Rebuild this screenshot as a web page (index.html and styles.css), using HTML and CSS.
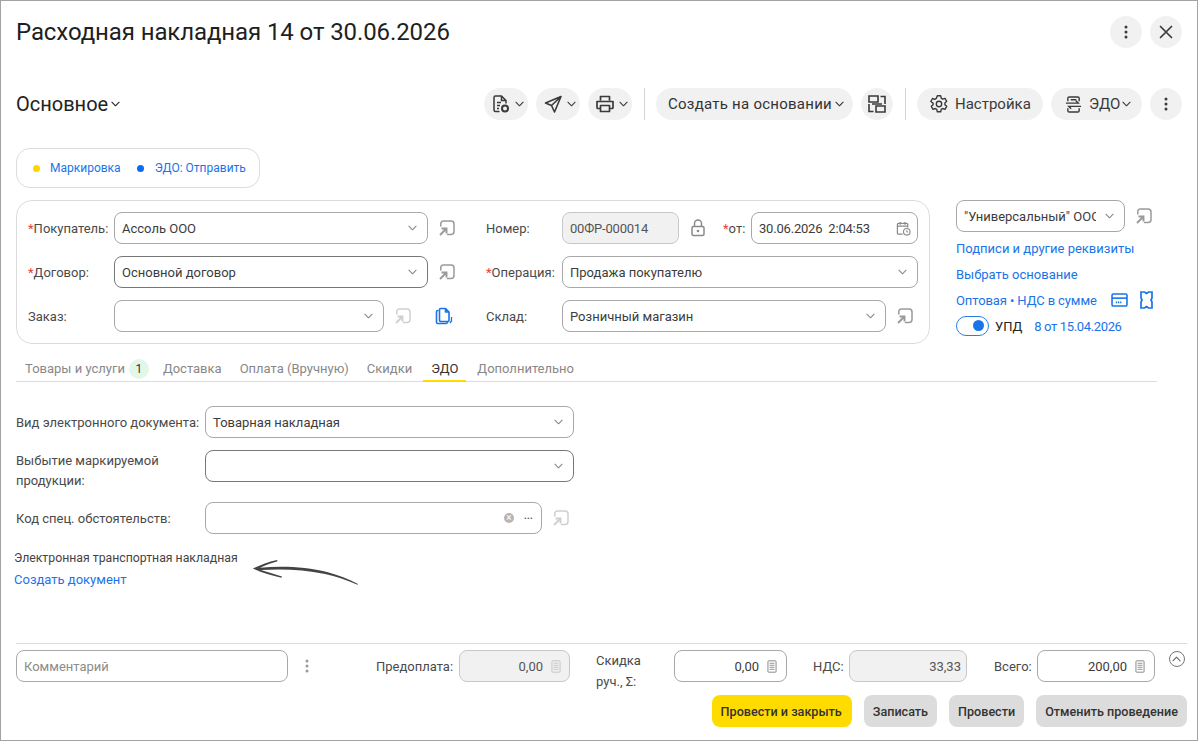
FILE: index.html
```html
<!DOCTYPE html>
<html lang="ru">
<head>
    <meta charset="UTF-8">
    <title>Расходная накладная 14 от 30.06.2026</title>
    <link rel="stylesheet" href="styles.css">
</head>
<body>
    <svg class="sprite" width="0" height="0">
        <symbol id="i-chev" viewBox="0 0 10 6"><path d="M1 1l4 4 4-4" fill="none" stroke="currentColor" stroke-width="1.2" stroke-linecap="round" stroke-linejoin="round"/></symbol>
        <symbol id="i-dots" viewBox="0 0 16 16"><circle cx="8" cy="3" r="1.5"/><circle cx="8" cy="8" r="1.5"/><circle cx="8" cy="13" r="1.5"/></symbol>
        <symbol id="i-close" viewBox="0 0 16 16"><path d="M2.5 2.5l11 11M13.5 2.5l-11 11" fill="none" stroke="currentColor" stroke-width="1.7" stroke-linecap="round"/></symbol>
        <symbol id="i-link" viewBox="0 0 16 16"><path d="M1.800 6V3.500A2.500 2.500 0 0 1 4.300 1h7.700a3 3 0 0 1 3 3v7.500a3 3 0 0 1-3 3H8.500" fill="none" stroke="currentColor" stroke-width="1.500" stroke-linecap="round"/><path d="M1 15l5.500-5.500M2.500 8.500h5v5" fill="none" stroke="currentColor" stroke-width="1.900"/></symbol>
        <symbol id="i-doc" viewBox="0 0 20 20"><path d="M8.500 17.500H4.500a1.500 1.500 0 0 1-1.500-1.500V3.500A1.500 1.500 0 0 1 4.500 2h6l4.500 4.500v3M10.500 2v4.500H15M6 8.500h4M6 11.500h3M6 14.500h2" fill="none" stroke="currentColor" stroke-width="1.500" stroke-linejoin="round"/><circle cx="14" cy="14.500" r="3" fill="none" stroke="currentColor" stroke-width="2"/></symbol>
        <symbol id="i-send" viewBox="0 0 20 20"><path d="M18 2.500L2.500 9l6 2.500 3 6.500zM18 2.500L8.500 11.500" fill="none" stroke="currentColor" stroke-width="1.600" stroke-linejoin="round"/></symbol>
        <symbol id="i-print" viewBox="0 0 20 20"><path d="M5.500 6.500V2.500h9v4M5.500 14.500H3a1 1 0 0 1-1-1v-6h16v6a1 1 0 0 1-1 1h-2.500M5.500 11.500h9v6h-9z" fill="none" stroke="currentColor" stroke-width="1.700" stroke-linejoin="round"/></symbol>
        <symbol id="i-struct" viewBox="0 0 18 18"><path d="M1 1h9v6H1zM8 11h9v6H8zM12.500 1.500H17V9M1 9v7.500h4.500M4 9h10" fill="none" stroke="currentColor" stroke-width="1.600"/></symbol>
        <symbol id="i-gear" viewBox="0 0 20 20"><path d="M8.300 1.800h3.400l.5 2.400 1.500.9 2.300-.8 1.700 3-1.800 1.600v1.800l1.800 1.600-1.700 3-2.300-.8-1.500.9-.5 2.400H8.300l-.5-2.400-1.500-.9-2.300.8-1.700-3 1.800-1.600V9.100L1.800 7.500l1.700-3 2.300.8 1.500-.9z" fill="none" stroke="currentColor" stroke-width="1.400" stroke-linejoin="round"/><circle cx="10" cy="10" r="2.700" fill="none" stroke="currentColor" stroke-width="1.400"/></symbol>
        <symbol id="i-edo" viewBox="0 0 18 20"><path d="M3 6.500V3.500A1.500 1.500 0 0 1 4.500 2h9A1.500 1.500 0 0 1 15 3.500v3M3 14v2.500A1.500 1.500 0 0 0 4.500 18h9a1.500 1.500 0 0 0 1.500-1.500V14M1 8.500h13l-2.500-2.500M17 12H4l2.500 2.500M6 5h6" fill="none" stroke="currentColor" stroke-width="1.500"/></symbol>
        <symbol id="i-lock" viewBox="0 0 14 18"><path d="M3.500 7.500V4.500a3.500 3.500 0 0 1 7 0v3" fill="none" stroke="currentColor" stroke-width="1.500"/><rect x="1" y="7.500" width="12" height="9" rx="1.500" fill="none" stroke="currentColor" stroke-width="1.500"/><circle cx="7" cy="12" r="1.300"/></symbol>
        <symbol id="i-cal" viewBox="0 0 16 16"><path d="M7 14H2.500a1 1 0 0 1-1-1V3.500a1 1 0 0 1 1-1h9a1 1 0 0 1 1 1V7M1.500 5.500h11M4.500 1v3M9.500 1v3" fill="none" stroke="currentColor" stroke-width="1.300"/><circle cx="11.500" cy="11.500" r="3.500" fill="none" stroke="currentColor" stroke-width="1.200"/><path d="M11.500 9.800v1.900h1.500" fill="none" stroke="currentColor"/></symbol>
        <symbol id="i-copy" viewBox="0 0 18 18"><path d="M3.500 3.500H2.800a1.300 1.300 0 0 0-1.300 1.300v10.400a1.300 1.300 0 0 0 1.300 1.300H11a1.300 1.300 0 0 0 1.300-1.300v-.7" fill="none" stroke="currentColor" stroke-width="1.600"/><path d="M4.500 2.800A1.300 1.300 0 0 1 5.800 1.500h4.700l3.500 3.500v8.200a1.300 1.300 0 0 1-1.300 1.300H5.800a1.300 1.300 0 0 1-1.300-1.300zM10.500 1.500V5H14" fill="none" stroke="currentColor" stroke-width="1.600" stroke-linejoin="round"/><path d="M16.500 10v4l-1.500 2" fill="none" stroke="currentColor" stroke-width="1.300"/></symbol>
        <symbol id="i-card" viewBox="0 0 18 15"><rect x="1" y="1" width="16" height="13" rx="1.500" fill="none" stroke="currentColor" stroke-width="1.700"/><path d="M1 5.500h16" stroke="currentColor" stroke-width="1.700"/><path d="M5 10h6" stroke="currentColor" stroke-width="1.800" stroke-dasharray="1.500 .8"/></symbol>
        <symbol id="i-ticket" viewBox="0 0 13 18"><path d="M1 1h3.500l2 1.500 2-1.500H12v6l-1 2 1 2v6H8.500l-2-1.500-2 1.500H1v-6l1-2-1-2z" fill="none" stroke="currentColor" stroke-width="1.700"/></symbol>
        <symbol id="i-calc" viewBox="0 0 12 16"><rect x="1" y="1" width="10" height="14" rx="1" fill="none" stroke="currentColor" stroke-width="1.200"/><path d="M3 4h6M3 6.500h6M3 9h6M3 11.500h6" stroke="currentColor" stroke-width="1.100"/></symbol>
    </svg>

    <div class="window">
        <div class="title-row">
            <h1>Расходная накладная 14 от 30.06.2026</h1>
            <div class="title-btns">
                <button class="pill icon-only"><svg class="ic-16"><use href="#i-dots"/></svg></button>
                <button class="pill icon-only"><svg class="ic-16"><use href="#i-close"/></svg></button>
            </div>
        </div>

        <div class="toolbar">
            <div class="section-name">Основное<svg class="chev-sm"><use href="#i-chev"/></svg></div>
            <div class="tools">
                <button class="pill drop"><svg class="ic-20"><use href="#i-doc"/></svg><svg class="chev-sm"><use href="#i-chev"/></svg></button>
                <button class="pill drop"><svg class="ic-20"><use href="#i-send"/></svg><svg class="chev-sm"><use href="#i-chev"/></svg></button>
                <button class="pill drop"><svg class="ic-20"><use href="#i-print"/></svg><svg class="chev-sm"><use href="#i-chev"/></svg></button>
                <span class="sep"></span>
                <button class="pill create">Создать на основании<svg class="chev-sm"><use href="#i-chev"/></svg></button>
                <button class="pill icon-only"><svg class="ic-struct"><use href="#i-struct"/></svg></button>
                <span class="sep"></span>
                <button class="pill settings"><svg class="ic-20"><use href="#i-gear"/></svg>Настройка</button>
                <button class="pill edo"><svg class="ic-edo"><use href="#i-edo"/></svg>ЭДО<svg class="chev-sm"><use href="#i-chev"/></svg></button>
                <button class="pill icon-only"><svg class="ic-16"><use href="#i-dots"/></svg></button>
            </div>
        </div>

        <div class="status">
            <span class="dot yellow"></span><a class="link">Маркировка</a>
            <span class="dot blue"></span><a class="link">ЭДО: Отправить</a>
        </div>

        <div class="main">
            <div class="card">
                <div class="col col-left">
                    <div class="row">
                        <label class="lbl lbl-l"><i>*</i>Покупатель:</label>
                        <div class="field w-314">Ассоль ООО<svg class="chev"><use href="#i-chev"/></svg></div>
                        <svg class="link-ic"><use href="#i-link"/></svg>
                    </div>
                    <div class="row">
                        <label class="lbl lbl-l"><i>*</i>Договор:</label>
                        <div class="field w-314 dark">Основной договор<svg class="chev"><use href="#i-chev"/></svg></div>
                        <svg class="link-ic"><use href="#i-link"/></svg>
                    </div>
                    <div class="row">
                        <label class="lbl lbl-l">Заказ:</label>
                        <div class="field w-270"><svg class="chev"><use href="#i-chev"/></svg></div>
                        <svg class="link-ic faded"><use href="#i-link"/></svg>
                        <svg class="copy-ic"><use href="#i-copy"/></svg>
                    </div>
                </div>
                <div class="col col-right">
                    <div class="row">
                        <label class="lbl lbl-r">Номер:</label>
                        <div class="field disabled w-117 digits">00ФР-000014</div>
                        <svg class="lock-ic"><use href="#i-lock"/></svg>
                        <label class="lbl lbl-from"><i>*</i>от:</label>
                        <div class="field w-167 digits">30.06.2026&nbsp; 2:04:53<svg class="cal-ic"><use href="#i-cal"/></svg></div>
                    </div>
                    <div class="row">
                        <label class="lbl lbl-r"><i>*</i>Операция:</label>
                        <div class="field w-356">Продажа покупателю<svg class="chev"><use href="#i-chev"/></svg></div>
                    </div>
                    <div class="row">
                        <label class="lbl lbl-r">Склад:</label>
                        <div class="field w-324">Розничный магазин<svg class="chev"><use href="#i-chev"/></svg></div>
                        <svg class="link-ic"><use href="#i-link"/></svg>
                    </div>
                </div>
            </div>

            <div class="side">
                <div class="row">
                    <div class="field w-169"><span class="clip">"Универсальный" ООО</span><svg class="chev"><use href="#i-chev"/></svg></div>
                    <svg class="link-ic"><use href="#i-link"/></svg>
                </div>
                <a class="link side-link">Подписи и другие реквизиты</a>
                <a class="link side-link">Выбрать основание</a>
                <div class="side-row">
                    <a class="link price">Оптовая • НДС в сумме</a>
                    <svg class="card-ic"><use href="#i-card"/></svg>
                    <svg class="ticket-ic"><use href="#i-ticket"/></svg>
                </div>
                <div class="side-row upd">
                    <span class="toggle"></span>
                    <span class="upd-name">УПД</span>
                    <a class="link digits">8 от 15.04.2026</a>
                </div>
            </div>
        </div>

        <div class="tabs">
            <span class="tab tab-first">Товары и услуги<b class="badge">1</b></span>
            <span class="tab">Доставка</span>
            <span class="tab">Оплата (Вручную)</span>
            <span class="tab">Скидки</span>
            <span class="tab active">ЭДО</span>
            <span class="tab">Дополнительно</span>
        </div>

        <div class="edo-form">
            <div class="row">
                <label class="lbl lbl-edo">Вид электронного документа:</label>
                <div class="field w-369">Товарная накладная<svg class="chev"><use href="#i-chev"/></svg></div>
            </div>
            <div class="row row-top">
                <label class="lbl lbl-edo two-line">Выбытие маркируемой продукции:</label>
                <div class="field w-369 dark"><svg class="chev"><use href="#i-chev"/></svg></div>
            </div>
            <div class="row">
                <label class="lbl lbl-edo">Код спец. обстоятельств:</label>
                <div class="field w-337">
                    <span class="clear">×</span><span class="more">•••</span>
                </div>
                <svg class="link-ic faded"><use href="#i-link"/></svg>
            </div>
        </div>

        <div class="etn">
            <div class="etn-title">Электронная транспортная накладная</div>
            <a class="link">Создать документ</a>
            <svg class="arrow" viewBox="0 0 108 26" width="108" height="26">
                <path d="M1 9.500C8 6 16 3 25 1l.6 1.300C19 4.200 13 6.500 8 8.800 30 6.500 55 8 75 13c11 3 22 7 31 12l-.5.800C95 21 84 17.500 73 15 52 10.500 30 9.800 9 11c6 2 13 4 21 6.500l-.5 1.300C20 16.500 9 13.500 1 9.500z" fill="#444"/>
            </svg>
        </div>

        <div class="footer">
            <div class="totals">
                <div class="field w-272 placeholder">Комментарий</div>
                <svg class="ic-16 foot-dots"><use href="#i-dots"/></svg>
                <label class="lbl foot-prepay">Предоплата:</label>
                <div class="field disabled num w-111">0,00<svg class="calc-ic"><use href="#i-calc"/></svg></div>
                <label class="lbl foot-disc">Скидка руч., Σ:</label>
                <div class="field num w-113">0,00<svg class="calc-ic"><use href="#i-calc"/></svg></div>
                <label class="lbl foot-vat">НДС:</label>
                <div class="field disabled num w-118">33,33</div>
                <label class="lbl foot-total">Всего:</label>
                <div class="field num w-118">200,00<svg class="calc-ic"><use href="#i-calc"/></svg></div>
                <span class="collapse"><svg class="chev-sm"><use href="#i-chev"/></svg></span>
            </div>
            <div class="actions">
                <button class="act primary">Провести и закрыть</button>
                <button class="act">Записать</button>
                <button class="act">Провести</button>
                <button class="act">Отменить проведение</button>
            </div>
        </div>
    </div>
</body>
</html>
```

FILE: styles.css
```css
* {
    box-sizing: border-box;
}
html, body {
    margin: 0;
    padding: 0;
}
body {
    font-family: Roboto, "Liberation Sans", sans-serif;
    font-size: 13px;
    color: #333;
    background: #fff;
}
.sprite {
    position: absolute;
}
svg {
    display: block;
    flex: none;
    fill: currentColor;
}
.window {
    width: 1198px;
    height: 741px;
    border: 1px solid #a3a3a3;
    display: flex;
    flex-direction: column;
    overflow: hidden;
}
.title-row {
    display: flex;
    justify-content: space-between;
    align-items: center;
    height: 32px;
    margin: 15px 15px 0;
}
h1 {
    margin: 0;
    font-size: 24px;
    font-weight: 400;
    color: #1f1f1f;
    letter-spacing: -0.1px;
}
.title-btns, .tools {
    display: flex;
    align-items: center;
    gap: 8px;
}
.pill {
    display: flex;
    align-items: center;
    height: 32px;
    border: 0;
    border-radius: 16px;
    background: #f1f1f1;
    color: #3a3a3a;
    font-family: inherit;
    font-size: 15px;
    padding: 0;
}
.icon-only {
    width: 32px;
    justify-content: center;
}
.drop {
    width: 44px;
    padding-left: 7px;
    gap: 2px;
}
.create {
    width: 197px;
    padding-left: 12px;
    color: #333;
    letter-spacing: 0.25px;
}
.settings {
    width: 126px;
    padding-left: 12px;
    gap: 6px;
}
.edo {
    width: 91px;
    padding-left: 14px;
    gap: 7px;
}
.edo .chev-sm {
    margin-left: -5px;
}
.ic-16 {
    width: 16px;
    height: 16px;
}
.ic-20 {
    width: 20px;
    height: 20px;
}
.ic-struct {
    width: 18px;
    height: 18px;
}
.ic-edo {
    width: 17px;
    height: 19px;
}
.chev-sm {
    width: 9px;
    height: 6px;
    margin-left: 2px;
}
.create .chev-sm {
    margin-left: 3px;
}
.sep {
    width: 1px;
    height: 32px;
    background: #d4d4d4;
    margin: 0 3px 0 4px;
}
.toolbar {
    display: flex;
    justify-content: space-between;
    align-items: center;
    height: 32px;
    margin: 40px 15px 0;
}
.section-name {
    display: flex;
    align-items: center;
    font-size: 20px;
    color: #222;
}
.section-name .chev-sm {
    margin-left: 3px;
}
.status {
    display: flex;
    align-items: center;
    width: 244px;
    height: 40px;
    margin: 28px 0 0 15px;
    padding-left: 16px;
    border: 1px solid #dcdcdc;
    border-radius: 14px;
    font-size: 12px;
}
.dot {
    width: 7px;
    height: 7px;
    border-radius: 50%;
    margin-right: 10px;
}
.dot.yellow {
    background: #ffd400;
}
.dot.blue {
    background: #0a6cf5;
    margin-left: 16px;
    margin-right: 11px;
}
.link {
    color: #1a74e8;
    text-decoration: none;
}
.main {
    display: flex;
    margin: 12px 0 0 15px;
}
.card {
    display: flex;
    width: 914px;
    height: 144px;
    padding: 11px;
    border: 1px solid #dcdcdc;
    border-radius: 16px;
}
.col {
    display: flex;
    flex-direction: column;
    gap: 12px;
}
.col-left {
    width: 458px;
}
.row {
    display: flex;
    align-items: center;
    min-height: 32px;
}
.row-top {
    align-items: flex-start;
    min-height: 40px;
}
.lbl {
    flex: none;
    height: 32px;
    line-height: 34px;
    color: #4a4a4a;
    white-space: nowrap;
}
.lbl i {
    color: #e8403a;
    font-style: normal;
}
.lbl-l {
    width: 86px;
}
.lbl-r {
    width: 76px;
}
.lbl-from {
    width: 28px;
    margin-left: 18px;
}
.field {
    position: relative;
    display: flex;
    align-items: center;
    flex: none;
    height: 32px;
    padding: 0 7px;
    border: 1px solid #a8a8a8;
    border-radius: 8px;
    background: #fff;
    color: #3c3c3c;
    white-space: nowrap;
}
.field.dark {
    border-color: #777;
}
.field.disabled {
    background: #f1f1f1;
    border-color: #c8c8c8;
    color: #555;
}
.digits {
    letter-spacing: -0.2px;
}
.field .chev {
    margin-left: auto;
    margin-right: 3px;
}
.chev {
    width: 9px;
    height: 6px;
    color: #888;
}
.w-314 { width: 314px; }
.w-270 { width: 270px; }
.w-117 { width: 117px; }
.w-167 { width: 167px; }
.w-356 { width: 356px; }
.w-324 { width: 324px; }
.w-169 { width: 169px; }
.w-369 { width: 369px; }
.w-337 { width: 337px; }
.w-272 { width: 272px; }
.w-111 { width: 111px; }
.w-113 { width: 113px; }
.w-118 { width: 118px; }
.link-ic {
    width: 16px;
    height: 16px;
    margin-left: 11px;
    color: #9a9a9a;
}
.link-ic.faded {
    color: #cfcfcf;
}
.copy-ic {
    width: 18px;
    height: 18px;
    margin-left: 24px;
    color: #1a74e8;
}
.lock-ic {
    width: 14px;
    height: 18px;
    margin-left: 12px;
    color: #8a8a8a;
}
.cal-ic {
    width: 15px;
    height: 15px;
    margin-left: auto;
    margin-right: -1px;
    color: #8a8a8a;
}
.side {
    display: flex;
    flex-direction: column;
    margin-left: 26px;
    width: 220px;
}
.clip {
    overflow: hidden;
    width: 132px;
}
.side-link {
    display: block;
    margin-top: 8px;
    line-height: 17px;
}
.side-link + .side-link {
    margin-top: 9px;
}
.side-row {
    display: flex;
    align-items: center;
    height: 18px;
    margin-top: 8px;
}
.price {
    letter-spacing: -0.1px;
}
.card-ic {
    width: 17px;
    height: 14px;
    margin-left: 14px;
    color: #1a74e8;
}
.ticket-ic {
    width: 13px;
    height: 18px;
    margin-left: 12px;
    color: #1a74e8;
}
.upd {
    margin-top: 8px;
}
.upd .digits {
    letter-spacing: -0.35px;
}
.toggle {
    position: relative;
    width: 33px;
    height: 20px;
    border: 1.500px solid #2a7de8;
    border-radius: 10px;
}
.toggle::after {
    content: "";
    position: absolute;
    right: 4px;
    top: 3px;
    width: 11px;
    height: 11px;
    border-radius: 50%;
    background: #1a74e8;
}
.upd-name {
    margin: 0 12px 0 6px;
    color: #222;
}
.tabs {
    display: flex;
    align-items: flex-start;
    width: 1141px;
    height: 25px;
    margin: 13px 0 0 15px;
    border-bottom: 1px solid #dcdcdc;
}
.tab {
    display: flex;
    align-items: center;
    height: 25px;
    padding: 0 9px 2px;
    color: #888;
}
.tab-first {
    padding-right: 5px;
}
.tab.active {
    margin: 0 2px;
    padding: 0 8px;
    color: #333;
    border-bottom: 2px solid #ffd900;
}
.badge {
    display: flex;
    justify-content: center;
    align-items: center;
    width: 20px;
    height: 20px;
    margin-left: 4px;
    border-radius: 50%;
    background: #e3f7e9;
    color: #333;
    font-size: 12px;
    font-weight: 400;
}
.edo-form {
    display: flex;
    flex-direction: column;
    gap: 12px;
    margin: 24px 0 0 15px;
}
.lbl-edo {
    width: 189px;
}
.two-line {
    height: 40px;
    padding-top: 1px;
    white-space: normal;
    line-height: 20px;
}
.clear {
    display: flex;
    justify-content: center;
    align-items: center;
    width: 10px;
    height: 10px;
    margin-left: auto;
    border-radius: 50%;
    background: #b5b5b5;
    color: #fff;
    font-size: 10px;
    line-height: 1;
}
.more {
    margin: 0 1px 0 10px;
    font-size: 8px;
    letter-spacing: 0.3px;
    color: #555;
}
.etn {
    position: relative;
    margin: 13px 0 0 13px;
    font-size: 13px;
    line-height: 22px;
}
.etn-title {
    font-size: 12.280px;
    color: #444;
}
.arrow {
    position: absolute;
    left: 238px;
    top: 12px;
}
.footer {
    margin: auto 10px 13px 15px;
    padding-top: 6px;
    border-top: 1px solid #dcdcdc;
}
.totals {
    display: flex;
    align-items: flex-start;
    height: 32px;
}
.placeholder {
    color: #8c8c8c;
}
.foot-dots {
    margin: 8px 0 0 11px;
    color: #9a9a9a;
}
.foot-prepay {
    margin-left: 61px;
    width: 83px;
}
.foot-disc {
    width: 60px;
    height: 42px;
    margin: 0 18px 0 26px;
    white-space: normal;
    line-height: 21px;
}
.foot-vat {
    margin-left: 26px;
    width: 36px;
}
.foot-total {
    margin-left: 27px;
    width: 43px;
}
.num {
    justify-content: flex-end;
}
.disabled.num {
    padding-right: 5px;
}
.calc-ic {
    width: 10px;
    height: 13px;
    margin: 0 2px 0 8px;
    color: #888;
}
.disabled .calc-ic {
    margin-right: 3px;
    color: #c4c4c4;
}
.collapse {
    display: flex;
    justify-content: center;
    align-items: center;
    width: 16px;
    height: 16px;
    margin: 1px 0 0 14px;
    border: 1px solid #777;
    border-radius: 50%;
    color: #666;
    transform: rotate(180deg);
}
.collapse .chev-sm {
    margin: 0;
}
.actions {
    display: flex;
    justify-content: flex-end;
    gap: 12px;
    margin-top: 13px;
}
.act {
    height: 32px;
    padding: 0 9px;
    border: 0;
    border-radius: 8px;
    background: #dcdcdc;
    color: #333;
    font-family: inherit;
    font-size: 12.600px;
    font-weight: 500;
}
.act.primary {
    padding-right: 10px;
    background: #ffdc00;
}
```
